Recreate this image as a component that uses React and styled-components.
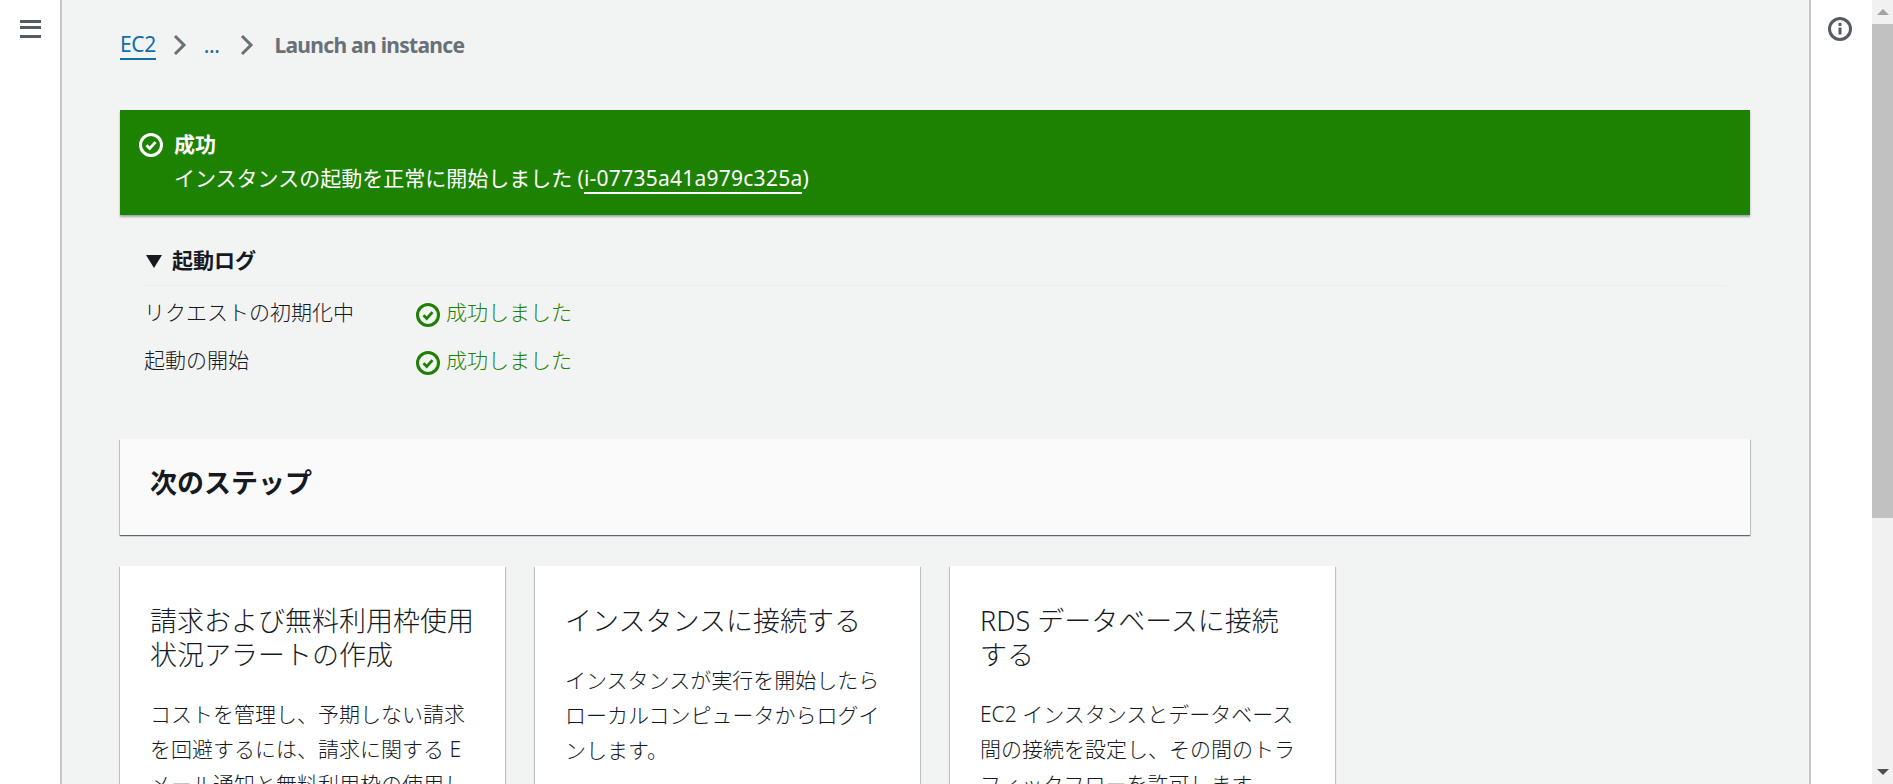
import React from "react";
import styled, { createGlobalStyle } from "styled-components";

const GlobalStyle = createGlobalStyle`
  html, body {
    margin: 0;
    height: 100%;
    overflow: hidden;
    background: #f2f3f3;
  }

  body {
    font-family: "Noto Sans", "Noto Sans CJK JP", sans-serif;
    font-size: 21px;
    line-height: 30px;
    color: #16191f;
  }

  * {
    box-sizing: border-box;
  }
`;

const CheckIcon = ({ size = 24 }) => (
  <svg width={size} height={size} viewBox="0 0 24 24" fill="none" stroke="currentColor" strokeWidth="3">
    <circle cx="12" cy="12" r="10.5" />
    <path d="M7.5 12.3l3.2 3.2 5.8-6.4" strokeWidth="2.8" />
  </svg>
);

const cardShadow = `
  0 1px 1px 0 rgba(0, 28, 36, 0.5),
  1px 1px 1px 0 rgba(0, 28, 36, 0.15),
  -1px 1px 1px 0 rgba(0, 28, 36, 0.15)
`;

const Layout = styled.div`
  display: flex;
  height: 784px;
  overflow: hidden;
`;

const NavRail = styled.div`
  width: 62px;
  flex: none;
  background: #fff;
  border-right: 2px solid #c4c6c8;
  padding: 20px 0 0 20px;
`;

const MenuButton = styled.div`
  width: 21px;
  height: 18px;
  border-top: 3px solid #545b64;
  border-bottom: 3px solid #545b64;
  position: relative;

  &::after {
    content: "";
    position: absolute;
    left: 0;
    right: 0;
    top: 3px;
    height: 3px;
    background: #545b64;
  }
`;

const Main = styled.main`
  flex: 1;
  min-width: 0;
  padding: 0 59px 0 58px;
  overflow: hidden;
`;

const Breadcrumbs = styled.nav`
  display: flex;
  align-items: center;
  height: 30px;
  margin-top: 30px;
  font-size: 21px;
`;

const CrumbLink = styled.a`
  color: #0f6fad;
  border-bottom: ${(p) => (p.$plain ? "none" : "2px solid #0f6fad")};
  line-height: 28px;
  letter-spacing: -0.4px;
`;

const CrumbCurrent = styled.span`
  color: #687078;
  font-weight: 700;
  letter-spacing: -0.7px;
`;

const Chevron = styled.svg`
  width: 16px;
  height: 22px;
  margin: ${(p) => (p.$wide ? "0 19px 0 20px" : "0 16px")};
  fill: none;
  stroke: #687078;
  stroke-width: 3;
`;

const Flash = styled.div`
  display: flex;
  gap: 11px;
  margin-top: 50px;
  height: 105px;
  padding: 18px 20px 18px 19px;
  background: #1d8102;
  color: #fff;
  line-height: 33px;
  box-shadow: 0 2px 2px rgba(0, 28, 36, 0.35);
`;

const FlashIcon = styled.div`
  flex: none;
  padding-top: 5px;
  height: 33px;
`;

const FlashTitle = styled.div`
  font-weight: 700;
  margin-bottom: 1px;
`;

const FlashLink = styled.a`
  color: #fff;
  border-bottom: 2px solid #fff;
  letter-spacing: 0.25px;
`;

const LogSection = styled.section`
  margin: 30px 0 0;
  padding: 0 24px;
`;

const LogHeader = styled.div`
  display: flex;
  align-items: center;
  gap: 10px;
  height: 30px;
  font-weight: 700;
`;

const Caret = styled.span`
  width: 0;
  height: 0;
  margin: 3px 0 0 2px;
  border-left: 8px solid transparent;
  border-right: 8px solid transparent;
  border-top: 13px solid #16191f;
`;

const LogRule = styled.hr`
  border: none;
  border-top: 1px solid #eaeded;
  margin: 10px 0 11px;
`;

const LogRow = styled.div`
  display: grid;
  grid-template-columns: 272px 1fr;
  height: 48px;
  font-weight: 300;
`;

const Status = styled.div`
  display: flex;
  align-items: flex-start;
  gap: 6px;
  color: #1d8102;

  svg {
    margin-top: 6px;
  }
`;

const NextSteps = styled.section`
  margin-top: 46px;
  height: 96px;
  padding: 27px 30px;
  background: #fafafa;
  box-shadow: ${cardShadow};
`;

const NextTitle = styled.h2`
  margin: 0;
  font-size: 27px;
  line-height: 33px;
  font-weight: 700;
`;

const CardRow = styled.div`
  display: flex;
  gap: 30px;
  margin-top: 31px;
`;

const Card = styled.article`
  width: 385px;
  height: 420px;
  padding: 38px 30px 30px;
  background: #fff;
  box-shadow: ${cardShadow};
`;

const CardTitle = styled.h3`
  margin: 0 0 25px;
  font-size: 27px;
  line-height: 34px;
  font-weight: 300;
`;

const CardText = styled.p`
  margin: 0;
  line-height: 35px;
  font-weight: 300;
`;

const SidePanel = styled.aside`
  width: 63px;
  flex: none;
  background: #fff;
  border-left: 2px solid #c4c6c8;
  padding: 16px 0 0 16px;
  color: #545b64;
`;

const ScrollBar = styled.div`
  width: 21px;
  flex: none;
  display: flex;
  flex-direction: column;
  background: #f1f1f1;
`;

const ScrollArrow = styled.div`
  height: 24px;
  flex: none;
  display: flex;
  align-items: center;
  justify-content: center;
`;

const ScrollThumb = styled.div`
  height: 494px;
  flex: none;
  background: #c1c1c1;
`;

const ScrollTrack = styled.div`
  flex: 1;
`;

const Triangle = styled.span`
  width: 0;
  height: 0;
  border-left: 6px solid transparent;
  border-right: 6px solid transparent;
  ${(p) => (p.$up ? "border-bottom: 6px solid #a3a3a3;" : "border-top: 6px solid #505050;")}
`;

const cards = [
  {
    title: "請求および無料利用枠使用状況アラートの作成",
    text: "コストを管理し、予期しない請求を回避するには、請求に関する E メール通知と無料利用枠の使用しきい値を設定します。",
  },
  {
    title: "インスタンスに接続する",
    text: "インスタンスが実行を開始したらローカルコンピュータからログインします。",
  },
  {
    title: "RDS データベースに接続する",
    text: "EC2 インスタンスとデータベース間の接続を設定し、その間のトラフィックフローを許可します。",
  },
];

const logs = ["リクエストの初期化中", "起動の開始"];

const ChevronRight = ({ wide }) => (
  <Chevron $wide={wide} viewBox="0 0 16 22">
    <path d="M3 2l9 9-9 9" />
  </Chevron>
);

export default function App() {
  return (
    <>
      <GlobalStyle />
      <Layout>
        <NavRail>
          <MenuButton />
        </NavRail>
        <Main>
          <Breadcrumbs>
            <CrumbLink>EC2</CrumbLink>
            <ChevronRight />
            <CrumbLink $plain>...</CrumbLink>
            <ChevronRight wide />
            <CrumbCurrent>Launch an instance</CrumbCurrent>
          </Breadcrumbs>
          <Flash>
            <FlashIcon>
              <CheckIcon />
            </FlashIcon>
            <div>
              <FlashTitle>成功</FlashTitle>
              <div>
                インスタンスの起動を正常に開始しました (<FlashLink>i-07735a41a979c325a</FlashLink>)
              </div>
            </div>
          </Flash>
          <LogSection>
            <LogHeader>
              <Caret />
              起動ログ
            </LogHeader>
            <LogRule />
            {logs.map((label) => (
              <LogRow key={label}>
                <div>{label}</div>
                <Status>
                  <CheckIcon />
                  成功しました
                </Status>
              </LogRow>
            ))}
          </LogSection>
          <NextSteps>
            <NextTitle>次のステップ</NextTitle>
          </NextSteps>
          <CardRow>
            {cards.map((card) => (
              <Card key={card.title}>
                <CardTitle>{card.title}</CardTitle>
                <CardText>{card.text}</CardText>
              </Card>
            ))}
          </CardRow>
        </Main>
        <SidePanel>
          <svg width="26" height="26" viewBox="0 0 26 26" fill="none" stroke="currentColor" strokeWidth="3">
            <circle cx="13" cy="13" r="10.5" />
            <path d="M13 11.5v7" />
            <path d="M13 7v3" />
          </svg>
        </SidePanel>
        <ScrollBar>
          <ScrollArrow>
            <Triangle $up />
          </ScrollArrow>
          <ScrollThumb />
          <ScrollTrack />
          <ScrollArrow>
            <Triangle />
          </ScrollArrow>
        </ScrollBar>
      </Layout>
    </>
  );
}
